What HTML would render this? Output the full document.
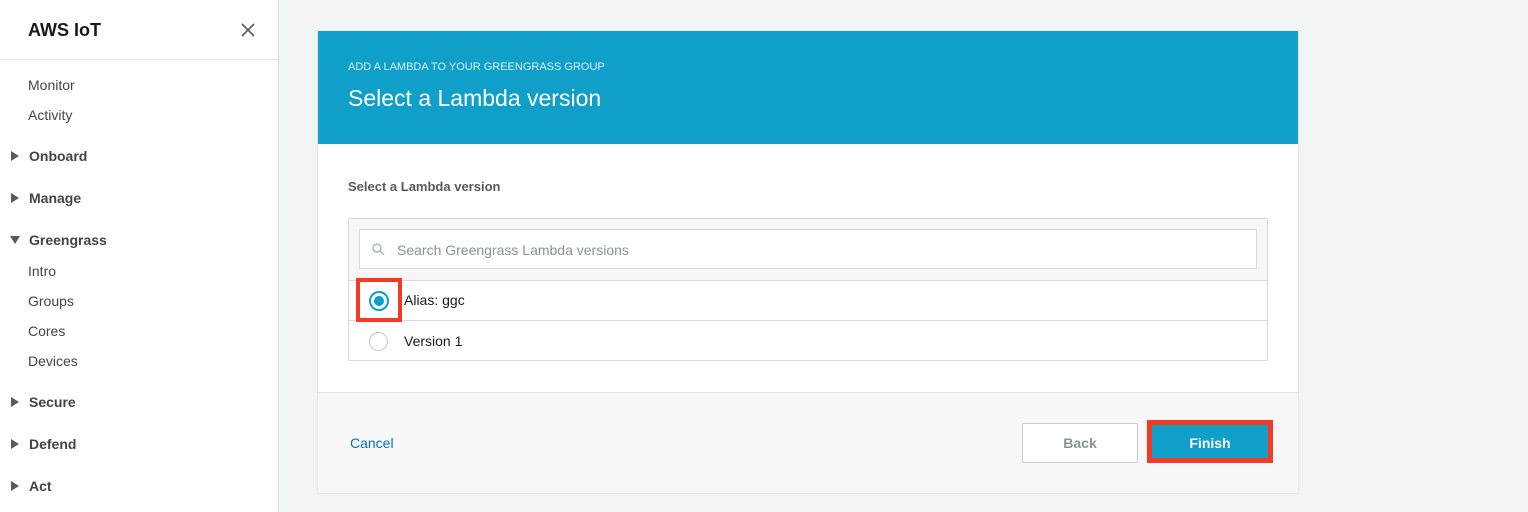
<!DOCTYPE html>
<html><head><style>
body{margin:0;width:1528px;height:512px;background:#f2f3f3;font-family:"Liberation Sans",sans-serif;position:relative;overflow:hidden}
.a{position:absolute}
.side{left:0;top:0;width:278px;height:512px;background:#fff;border-right:1px solid #ddd}
.nav{font-size:14px;color:#444;left:28px}
.grp{font-size:14px;font-weight:bold;color:#444;left:29px}
.tri{left:11px;width:0;height:0;border-top:5px solid transparent;border-bottom:5px solid transparent;border-left:8px solid #545b64}
.trid{left:10px;width:0;height:0;border-left:5px solid transparent;border-right:5px solid transparent;border-top:8px solid #545b64}
</style></head><body>
<div class="a side">
 <div class="a" style="left:28px;top:20px;font-size:18px;font-weight:bold;color:#16191f">AWS IoT</div>
 <svg class="a" style="left:240px;top:22px" width="16" height="16"><path d="M2 2L14 14M14 2L2 14" stroke="#545b64" stroke-width="1.6"/></svg>
 <div class="a" style="left:0;top:59px;width:278px;height:1px;background:#e6e6e6"></div>
 <div class="a nav" style="top:77px">Monitor</div>
 <div class="a nav" style="top:107px">Activity</div>
 <div class="a tri" style="top:151px"></div><div class="a grp" style="top:148px">Onboard</div>
 <div class="a tri" style="top:193px"></div><div class="a grp" style="top:190px">Manage</div>
 <div class="a trid" style="top:236px"></div><div class="a grp" style="top:232px">Greengrass</div>
 <div class="a nav" style="top:263px">Intro</div>
 <div class="a nav" style="top:293px">Groups</div>
 <div class="a nav" style="top:323px">Cores</div>
 <div class="a nav" style="top:353px">Devices</div>
 <div class="a tri" style="top:397px"></div><div class="a grp" style="top:394px">Secure</div>
 <div class="a tri" style="top:439px"></div><div class="a grp" style="top:436px">Defend</div>
 <div class="a tri" style="top:481px"></div><div class="a grp" style="top:478px">Act</div>
</div>
<div class="a" style="left:318px;top:31px;width:980px;height:461px;background:#fff;box-shadow:0 1px 2px rgba(0,0,0,.15)">
 <div class="a" style="left:0;top:0;width:980px;height:113px;background:#0f9fc8"></div>
 <div class="a" style="left:30px;top:30px;font-size:11px;color:#d6f0f8">ADD A LAMBDA TO YOUR GREENGRASS GROUP</div>
 <div class="a" style="left:30px;top:54px;font-size:23px;color:#fff">Select a Lambda version</div>
 <div class="a" style="left:30px;top:148px;font-size:13px;font-weight:bold;color:#545b64">Select a Lambda version</div>
 <div class="a" style="left:30px;top:187px;width:918px;height:141px;border:1px solid #d5dbdb;border-radius:2px;overflow:hidden">
  <div class="a" style="left:0;top:0;width:918px;height:61px;background:#f7f7f7;border-bottom:1px solid #d5dbdb"></div>
  <div class="a" style="left:10px;top:10px;width:896px;height:38px;background:#fff;border:1px solid #d5dbdb"></div>
  <svg class="a" style="left:23px;top:24px" width="13" height="13"><circle cx="5" cy="5" r="4" fill="none" stroke="#aab7b8" stroke-width="1.5"/><path d="M8 8L12 12" stroke="#aab7b8" stroke-width="1.5"/></svg>
  <div class="a" style="left:48px;top:23px;font-size:14px;color:#879596">Search Greengrass Lambda versions</div>
  <div class="a" style="left:0;top:101px;width:918px;height:1px;background:#d5dbdb"></div>
  <div class="a" style="left:20px;top:72px;width:20px;height:20px;border:2.5px solid #0f9fc8;border-radius:50%;box-sizing:border-box;background:#fff"></div>
  <div class="a" style="left:25px;top:77px;width:10px;height:10px;background:#0f9fc8;border-radius:50%"></div>
  <div class="a" style="left:55px;top:73px;font-size:14px;color:#16191f">Alias: ggc</div>
  <div class="a" style="left:20px;top:113px;width:19px;height:19px;border:1.5px solid #c6c6c6;border-radius:50%;box-sizing:border-box"></div>
  <div class="a" style="left:55px;top:114px;font-size:14px;color:#16191f">Version 1</div>
 </div>
 <div class="a" style="left:0;top:361px;width:980px;height:100px;background:#f8f8f8;border-top:1px solid #e4e4e4"></div>
 <div class="a" style="left:32px;top:404px;font-size:14px;color:#0073bb">Cancel</div>
 <div class="a" style="left:704px;top:392px;width:114px;height:38px;border:1px solid #ccc;border-radius:2px;background:#fff;font-size:14px;font-weight:bold;color:#879596;text-align:center;line-height:38px">Back</div>
 <div class="a" style="left:829px;top:389px;width:126px;height:43px;background:#f43a22;box-sizing:border-box;padding:5px">
  <div style="width:116px;height:33px;background:#0f9fc8;color:#fff;font-size:14px;font-weight:bold;text-align:center;line-height:36px">Finish</div>
 </div>
</div>
<div class="a" style="left:356px;top:278px;width:46px;height:44px;border:4px solid #f43a22;box-sizing:border-box"></div>
</body></html>
